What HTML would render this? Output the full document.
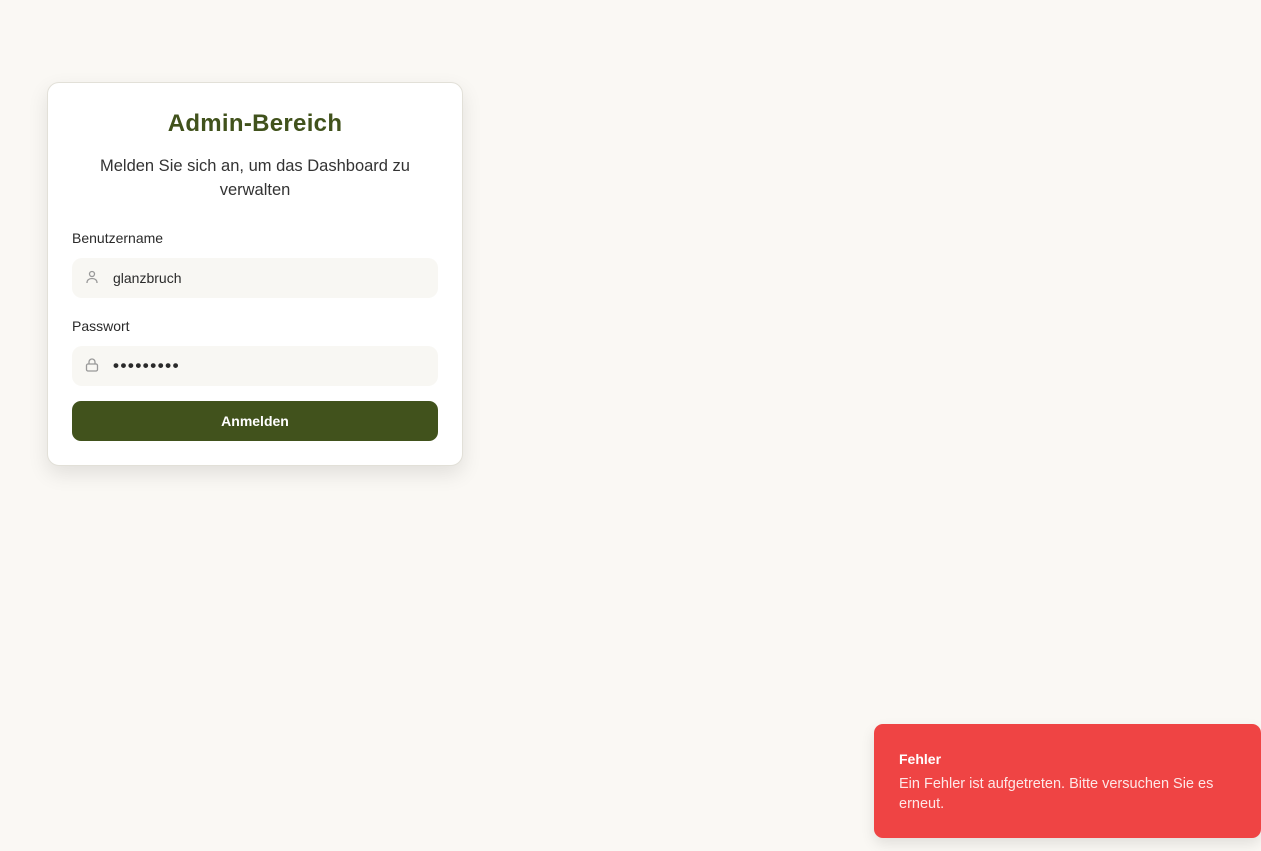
<!DOCTYPE html>
<html><head><meta charset="utf-8"><style>
*{box-sizing:border-box;margin:0;padding:0}
body{width:1261px;height:851px;background:#faf8f4;font-family:"Liberation Sans",sans-serif;position:relative;overflow:hidden;color:#2a2a2a}
.card{position:absolute;left:47px;top:82px;width:416px;height:384px;background:#fff;border:1px solid #e2e0d8;border-radius:12px;box-shadow:0 8px 20px rgba(0,0,0,.1)}
h1{position:absolute;top:27px;left:0;width:100%;text-align:center;font-size:24px;font-weight:bold;color:#41521c;letter-spacing:.3px}
.sub{position:absolute;top:71px;left:20px;right:20px;text-align:center;font-size:16.5px;line-height:24px;color:#333}
.lbl{position:absolute;left:24px;font-size:14px;color:#2a2a2a}
.inp{position:absolute;left:24px;width:366px;height:40px;background:#f8f7f3;border-radius:10px;font-size:14px}
.inp span{position:absolute;left:41px;top:12px}
.inp svg{position:absolute;left:12px;top:11px}
.btn{position:absolute;left:24px;top:318px;width:366px;height:40px;background:#41521c;border-radius:9px;color:#fff;font-weight:bold;font-size:14px;text-align:center;line-height:40px}
.toast{position:absolute;left:874px;top:724px;width:387px;height:114px;background:#ef4444;border-radius:9px;color:#fff;box-shadow:0 6px 14px rgba(0,0,0,.1)}
</style></head><body>
<div class="card">
<h1>Admin-Bereich</h1>
<div class="sub">Melden Sie sich an, um das Dashboard zu verwalten</div>
<div class="lbl" style="top:147px">Benutzername</div>
<div class="inp" style="top:175px"><svg width="16" height="16" viewBox="0 0 16 16" fill="none" stroke="#999" stroke-width="1.3"><circle cx="8" cy="5" r="2.5"/><path d="M3 14c0-3 2-4.5 5-4.5s5 1.5 5 4.5"/></svg><span>glanzbruch</span></div>
<div class="lbl" style="top:235px">Passwort</div>
<div class="inp" style="top:263px"><svg width="16" height="16" viewBox="0 0 16 16" fill="none" stroke="#999" stroke-width="1.3"><rect x="2.5" y="7" width="11" height="7" rx="1.5"/><path d="M5 7V5a3 3 0 0 1 6 0v2"/></svg><span style="top:10px;letter-spacing:1.5px;font-size:17px;font-weight:bold">•••••••••</span></div>
<div class="btn">Anmelden</div>
</div>
<div class="toast">
<div style="position:absolute;left:25px;top:27px;font-weight:bold;font-size:14px">Fehler</div>
<div style="position:absolute;left:25px;top:50px;width:350px;font-size:14.5px;line-height:20px;color:#fde8e8">Ein Fehler ist aufgetreten. Bitte versuchen Sie es erneut.</div>
</div>
</body></html>
